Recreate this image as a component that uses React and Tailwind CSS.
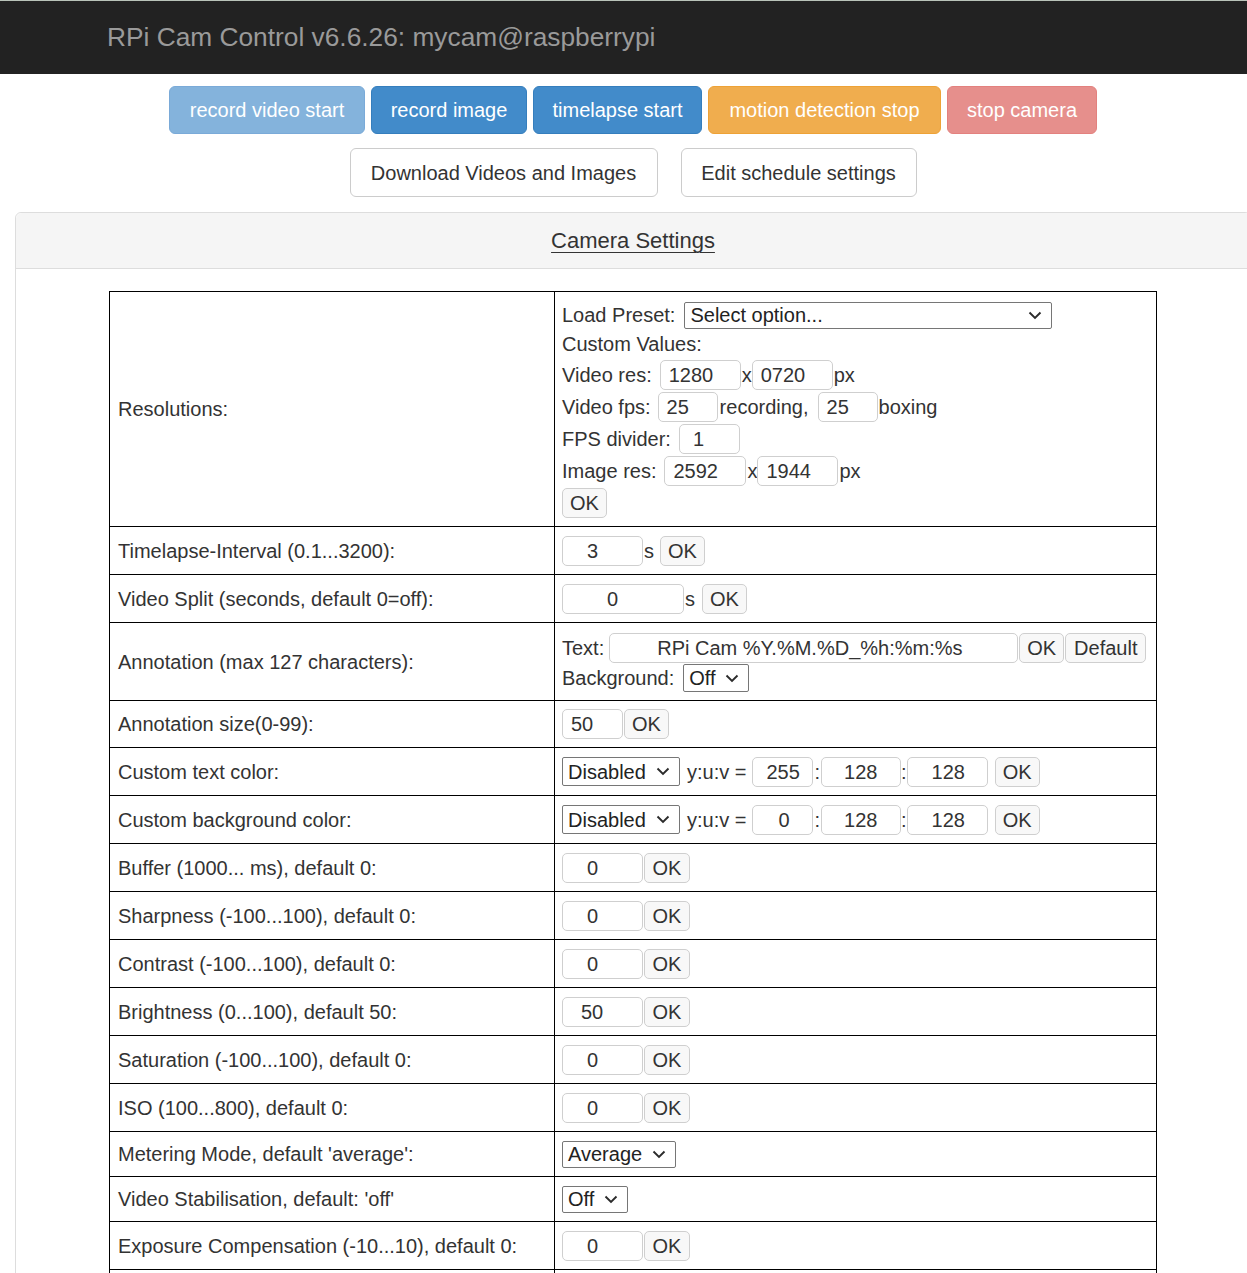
import React from 'react';

// Campo de texto simples (só leitura, só visual)
function Field({ value, cls }) {
  return (
    <input
      type="text"
      readOnly
      value={value}
      className={`h-[30px] ${cls} border border-[#cfcfcf] rounded-[5px] bg-white text-[20px] text-[#333] outline-none pr-0`}
    />
  );
}

function OkButton({ cls = 'w-[45px]', label = 'OK' }) {
  return (
    <button
      type="button"
      className={`h-[30px] ${cls} border border-[#cfcfcf] rounded-[5px] bg-[#f8f8f8] text-[20px] text-[#333] flex items-center justify-center`}
    >
      {label}
    </button>
  );
}

function Chevron() {
  return (
    <svg width="14" height="9" viewBox="0 0 14 9" className="shrink-0">
      <path d="M1.5 1.5 L7 7 L12.5 1.5" stroke="#2b2b2b" strokeWidth="1.9" fill="none" />
    </svg>
  );
}

function Select({ value, cls }) {
  return (
    <div
      className={`${cls} flex items-center justify-between border border-[#767676] rounded-[2px] bg-white pl-[5px] pr-[9px] text-[20px] text-[#222]`}
    >
      <span>{value}</span>
      <Chevron />
    </div>
  );
}

function Row({ label, h, children, top = false }) {
  return (
    <div className={`flex border-b border-black ${h}`}>
      <div className="w-[445px] shrink-0 border-r border-black pl-[8px] flex items-center">
        {label}
      </div>
      <div className={top ? 'flex-1 pl-[7px] flex flex-col pt-[7px]' : 'flex-1 pl-[7px] flex items-center'}>
        {children}
      </div>
    </div>
  );
}

function ValueOk({ value, cls = 'w-[81px] pl-[24px]' }) {
  return (
    <>
      <Field value={value} cls={cls} />
      <span className="ml-[1px]">
        <OkButton cls="w-[46px]" />
      </span>
    </>
  );
}

function ColorRow({ y }) {
  return (
    <>
      <Select value="Disabled" cls="w-[118px] h-[29px]" />
      <span className="ml-[7px] mr-[6px]">y:u:v =</span>
      <Field value={y} cls={y === '0' ? 'w-[61px] pl-[25px]' : 'w-[61px] pl-[13px]'} />
      <span className="mx-[1px]">:</span>
      <Field value="128" cls="w-[80px] pl-[22px]" />
      <span className="mx-[0px]">:</span>
      <Field value="128" cls="w-[81px] pl-[24px]" />
      <span className="ml-[7px]">
        <OkButton />
      </span>
    </>
  );
}

export default function App() {
  return (
    <div className="overflow-hidden bg-white font-['Liberation_Sans',Arial,sans-serif] text-[#333]">
      <div className="w-[1266px]">
        {/* Barra de título */}
        <div className="h-[74px] bg-[#222] border-t border-[#b9c3b9] flex items-center pl-[107px]">
          <span className="text-[26.3px] text-[#9a9a9a]">RPi Cam Control v6.6.26: mycam@raspberrypi</span>
        </div>

        {/* Botões principais */}
        <div className="mt-[12px] flex justify-center gap-[6px] text-[20px] text-white">
          <button className="w-[196px] h-[48px] rounded-[6px] bg-[#84b3dc] border border-[#7aaad8]">record video start</button>
          <button className="w-[156px] h-[48px] rounded-[6px] bg-[#428bca] border border-[#357ebd]">record image</button>
          <button className="w-[169px] h-[48px] rounded-[6px] bg-[#428bca] border border-[#357ebd]">timelapse start</button>
          <button className="w-[233px] h-[48px] rounded-[6px] bg-[#f0ad4e] border border-[#eea236]">motion detection stop</button>
          <button className="w-[150px] h-[48px] rounded-[6px] bg-[#e68f8c] border border-[#e3817e]">stop camera</button>
        </div>

        <div className="mt-[14px] flex justify-center gap-[23px] text-[20px] text-[#333]">
          <button className="w-[308px] h-[49px] rounded-[6px] bg-white border border-[#ccc]">Download Videos and Images</button>
          <button className="w-[236px] h-[49px] rounded-[6px] bg-white border border-[#ccc]">Edit schedule settings</button>
        </div>

        {/* Painel de configurações */}
        <div className="mt-[15px] mx-[15px] border border-[#ddd] rounded-[6px] bg-white">
          <div className="h-[56px] bg-[#f5f5f5] border-b border-[#ddd] rounded-t-[6px] flex items-center justify-center">
            <span className="text-[22px] text-[#333] underline underline-offset-[4px] decoration-1">Camera Settings</span>
          </div>

          <div className="pt-[22px] pb-[40px]">
            <div className="mx-auto w-[1048px] border-t border-l border-r border-black text-[20px] text-[#333]">
              <Row label="Resolutions:" h="h-[235px]" top>
                <div className="h-[32px] flex items-center">
                  <span>Load Preset:</span>
                  <span className="ml-[9px]">
                    <Select value="Select option..." cls="w-[368px] h-[27px]" />
                  </span>
                </div>
                <div className="h-[26px] flex items-center">Custom Values:</div>
                <div className="mt-[2px] h-[32px] flex items-center">
                  <span>Video res:</span>
                  <span className="ml-[8px]"><Field value="1280" cls="w-[81px] pl-[8px]" /></span>
                  <span className="ml-[1px] w-[10px]">x</span>
                  <Field value="0720" cls="w-[81px] pl-[8px]" />
                  <span className="ml-[1px]">px</span>
                </div>
                <div className="h-[32px] flex items-center">
                  <span>Video fps:</span>
                  <span className="ml-[7px]"><Field value="25" cls="w-[60px] pl-[8px]" /></span>
                  <span className="ml-[2px]">recording,</span>
                  <span className="ml-[9px]"><Field value="25" cls="w-[60px] pl-[8px]" /></span>
                  <span className="ml-[1px]">boxing</span>
                </div>
                <div className="h-[32px] flex items-center">
                  <span>FPS divider:</span>
                  <span className="ml-[8px]"><Field value="1" cls="w-[61px] pl-[13px]" /></span>
                </div>
                <div className="h-[32px] flex items-center">
                  <span>Image res:</span>
                  <span className="ml-[8px]"><Field value="2592" cls="w-[82px] pl-[8px]" /></span>
                  <span className="ml-[1px] w-[10px]">x</span>
                  <Field value="1944" cls="w-[81px] pl-[8px]" />
                  <span className="ml-[1px]">px</span>
                </div>
                <div className="h-[32px] flex items-center">
                  <OkButton />
                </div>
              </Row>

              <Row label="Timelapse-Interval (0.1...3200):" h="h-[48px]">
                <Field value="3" cls="w-[81px] pl-[24px]" />
                <span className="ml-[1px] w-[10px]">s</span>
                <span className="ml-[6px]"><OkButton /></span>
              </Row>

              <Row label="Video Split (seconds, default 0=off):" h="h-[48px]">
                <Field value="0" cls="w-[122px] pl-[44px]" />
                <span className="ml-[1px] w-[10px]">s</span>
                <span className="ml-[7px]"><OkButton /></span>
              </Row>

              <Row label="Annotation (max 127 characters):" h="h-[78px]" top>
                <div className="mt-[3px] h-[30px] flex items-center">
                  <span>Text:</span>
                  <span className="ml-[5px]">
                    <Field value="RPi Cam %Y.%M.%D_%h:%m:%s" cls="w-[409px] pl-[47px]" />
                  </span>
                  <span className="ml-[1px]"><OkButton /></span>
                  <span className="ml-[1px]"><OkButton cls="w-[81px]" label="Default" /></span>
                </div>
                <div className="h-[30px] flex items-center">
                  <span>Background:</span>
                  <span className="ml-[9px]"><Select value="Off" cls="w-[66px] h-[28px]" /></span>
                </div>
              </Row>

              <Row label="Annotation size(0-99):" h="h-[47px]">
                <Field value="50" cls="w-[61px] pl-[8px]" />
                <span className="ml-[1px]"><OkButton /></span>
              </Row>

              <Row label="Custom text color:" h="h-[48px]">
                <ColorRow y="255" />
              </Row>

              <Row label="Custom background color:" h="h-[48px]">
                <ColorRow y="0" />
              </Row>

              <Row label="Buffer (1000... ms), default 0:" h="h-[48px]">
                <ValueOk value="0" />
              </Row>
              <Row label="Sharpness (-100...100), default 0:" h="h-[48px]">
                <ValueOk value="0" />
              </Row>
              <Row label="Contrast (-100...100), default 0:" h="h-[48px]">
                <ValueOk value="0" />
              </Row>
              <Row label="Brightness (0...100), default 50:" h="h-[48px]">
                <ValueOk value="50" cls="w-[81px] pl-[18px]" />
              </Row>
              <Row label="Saturation (-100...100), default 0:" h="h-[48px]">
                <ValueOk value="0" />
              </Row>
              <Row label="ISO (100...800), default 0:" h="h-[48px]">
                <ValueOk value="0" />
              </Row>

              <Row label="Metering Mode, default 'average':" h="h-[45px]">
                <Select value="Average" cls="w-[114px] h-[27px]" />
              </Row>
              <Row label="Video Stabilisation, default: 'off'" h="h-[45px]">
                <Select value="Off" cls="w-[66px] h-[27px]" />
              </Row>

              <Row label="Exposure Compensation (-10...10), default 0:" h="h-[48px]">
                <ValueOk value="0" />
              </Row>
              {/* linha seguinte, fora do recorte */}
              <Row label="" h="h-[45px]" />
            </div>
          </div>
        </div>
      </div>
    </div>
  );
}
